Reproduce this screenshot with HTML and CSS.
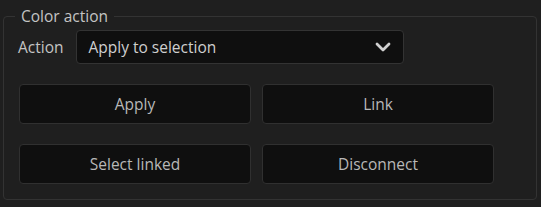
FILE: index.html
```html
<!DOCTYPE html>
<html lang="en">
<head>
    <meta charset="UTF-8">
    <title>Color action</title>
    <link rel="stylesheet" href="styles.css">
</head>
<body>
    <fieldset class="panel">
        <legend>Color action</legend>
        <div class="action-row">
            <label class="action-label">Action</label>
            <div class="select">
                <span>Apply to selection</span>
                <svg class="chevron" width="16" height="10" viewBox="0 0 16 10">
                    <path d="M2 2 L8 8 L14 2" fill="none" stroke="#d0d0d0" stroke-width="2.8" stroke-linecap="round" stroke-linejoin="round"/>
                </svg>
            </div>
        </div>
        <div class="buttons">
            <button>Apply</button>
            <button>Link</button>
            <button>Select linked</button>
            <button>Disconnect</button>
        </div>
    </fieldset>
</body>
</html>
```

FILE: styles.css
```css
body {
    margin: 0;
    padding: 8px 4px 0 3px;
    background-color: #1f1f1f;
    font-family: 'Open Sans', 'Noto Sans', sans-serif;
    font-size: 15.5px;
    color: #c2c2c2;
}

.panel {
    margin: 0;
    height: 192px;
    box-sizing: border-box;
    border: 1px solid #333333;
    border-radius: 4px;
    padding: 6px 14px 0 14px;
}

.panel legend {
    margin-left: -3px;
    padding: 0 6px;
    line-height: 16px;
    color: #c4c4c4;
}

.action-row {
    display: flex;
    align-items: center;
    gap: 12px;
}

.action-label {
    color: #c4c4c4;
}

.select {
    width: 328px;
    height: 34px;
    box-sizing: border-box;
    background-color: #0f0f0f;
    border: 1px solid #333333;
    border-radius: 4px;
    display: flex;
    align-items: center;
    justify-content: space-between;
    padding: 0 12px;
    color: #cfcfcf;
}

.buttons {
    display: grid;
    grid-template-columns: 232px 232px;
    column-gap: 11px;
    row-gap: 20px;
    margin-top: 20px;
    margin-left: 1px;
}

button {
    height: 40px;
    background-color: #0f0f0f;
    border: 1px solid #303030;
    border-radius: 4px;
    color: #b8b8b8;
    font-family: inherit;
    font-size: 15.5px;
}
```
